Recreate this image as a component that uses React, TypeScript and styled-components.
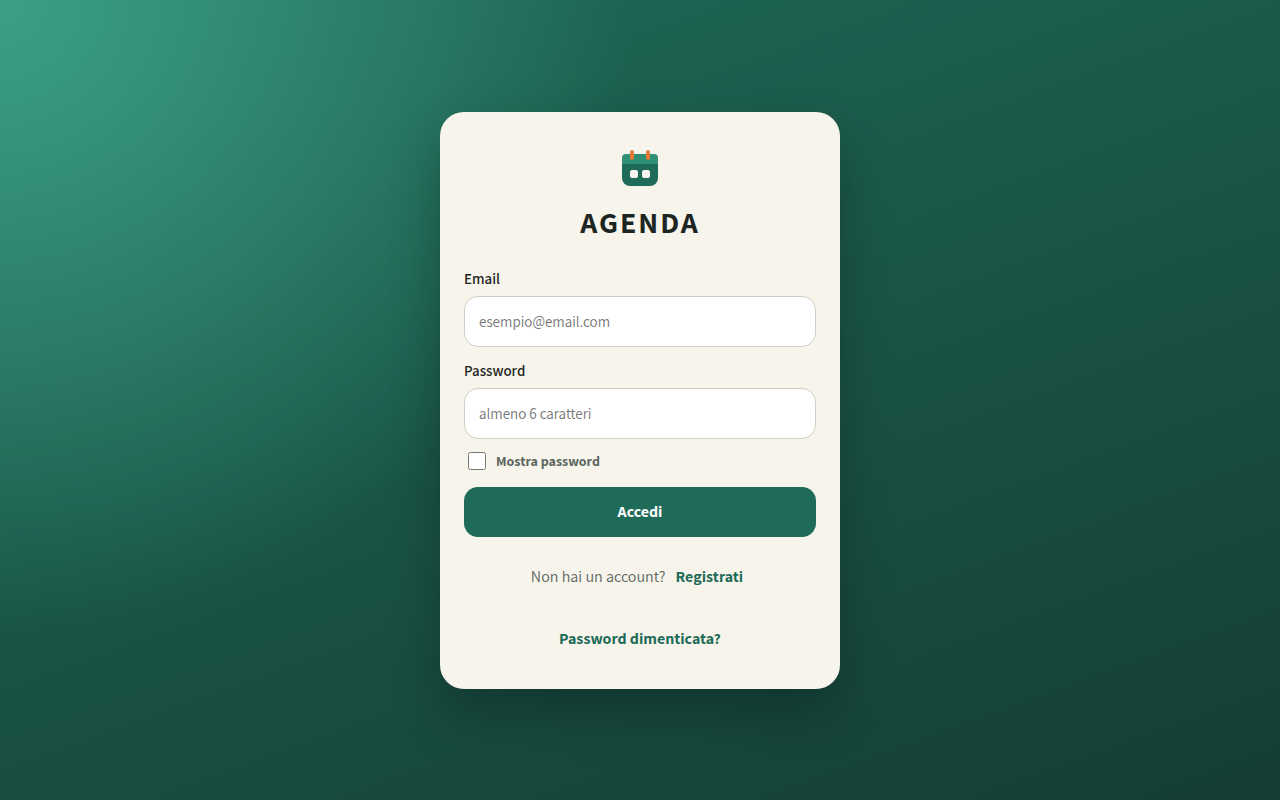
import { useState } from "react";
import styled, { createGlobalStyle } from "styled-components";

const GlobalStyle = createGlobalStyle`
  *, *::before, *::after { box-sizing: border-box; }
  body {
    margin: 0;
    color: #1c2521;
    font-family: "Assistant", "Source Sans Pro", "Source Sans 3", "Noto Sans CJK SC", sans-serif;
    font-size: 16px;
    line-height: 20px;
  }
  button, input { font: inherit; }
`;

const Page = styled.main`
  min-height: 100vh;
  display: grid;
  place-items: center;
  padding: 24px;
  background:
    radial-gradient(circle at top left, #3c9f86 0%, transparent 42%),
    linear-gradient(160deg, #1f6b59 0%, #143d33 100%);
`;

const Card = styled.section`
  width: 100%;
  max-width: 400px;
  padding: 28px 24px;
  border-radius: 24px;
  background: #f7f4ec;
  box-shadow: 0 24px 50px rgba(0, 0, 0, 0.25);
`;

const Brand = styled.header`
  display: flex;
  flex-direction: column;
  align-items: center;
  gap: 8px;
  margin-bottom: 30px;
`;

const Title = styled.h1`
  margin: 0;
  font-size: 30px;
  line-height: 36px;
  font-weight: 700;
  letter-spacing: 2px;
`;

const Form = styled.form`
  display: flex;
  flex-direction: column;
`;

const Field = styled.div`
  display: flex;
  flex-direction: column;
  gap: 8px;

  & + & { margin-top: 15px; }
`;

const Label = styled.label`
  font-size: 15px;
  line-height: 18px;
  font-weight: 600;
`;

const TextInput = styled.input`
  width: 100%;
  height: 51px;
  padding: 0 14px;
  border: 1px solid #cfcfc4;
  border-radius: 14px;
  background: #fff;
  color: inherit;
  font-size: 15px;

  &::placeholder { color: #757575; }
`;

const CheckLabel = styled.label`
  display: flex;
  align-items: center;
  align-self: flex-start;
  gap: 10px;
  min-height: 44px;
  padding: 0 4px;
  margin-bottom: 4px;
  color: #5c665f;
  font-size: 14px;
  font-weight: 700;
`;

const Checkbox = styled.input`
  width: 18px;
  height: 18px;
  margin: 0;
  accent-color: #1f6b59;
`;

const SubmitButton = styled.button`
  height: 50px;
  border: 0;
  border-radius: 14px;
  background: #1f6b59;
  color: #fff;
  font-weight: 700;
  cursor: pointer;
`;

const LinkRow = styled.p`
  display: flex;
  justify-content: center;
  align-items: center;
  gap: 4px;
  min-height: 44px;
  margin: 18px 0 0;
  color: #5c665f;
`;

const TextLink = styled.a`
  padding: 0 6px;
  color: #1f6b59;
  font-weight: 700;
  text-decoration: none;
`;

function CalendarLogo() {
  return (
    <svg width="56" height="56" viewBox="0 0 56 56" aria-hidden="true">
      <rect x="10" y="14" width="36" height="32" rx="8" fill="#1f6b59" />
      <path d="M10 24v-6a4 4 0 0 1 4-4h28a4 4 0 0 1 4 4v6z" fill="#2f8f77" />
      <rect x="18" y="10" width="4" height="10" rx="2" fill="#e07a3f" />
      <rect x="34" y="10" width="4" height="10" rx="2" fill="#e07a3f" />
      <rect x="18" y="30" width="8" height="8" rx="2" fill="#f7f4ec" />
      <rect x="30" y="30" width="8" height="8" rx="2" fill="#f7f4ec" />
    </svg>
  );
}

export default function App() {
  const [visible, setVisible] = useState(false);

  return (
    <>
      <GlobalStyle />
      <Page>
        <Card>
          <Brand>
            <CalendarLogo />
            <Title>AGENDA</Title>
          </Brand>
          <Form onSubmit={(event) => event.preventDefault()}>
            <Field>
              <Label htmlFor="email">Email</Label>
              <TextInput id="email" type="email" placeholder="esempio@email.com" />
            </Field>
            <Field>
              <Label htmlFor="password">Password</Label>
              <TextInput
                id="password"
                type={visible ? "text" : "password"}
                placeholder="almeno 6 caratteri"
              />
            </Field>
            <CheckLabel>
              <Checkbox
                type="checkbox"
                checked={visible}
                onChange={(event) => setVisible(event.target.checked)}
              />
              Mostra password
            </CheckLabel>
            <SubmitButton type="submit">Accedi</SubmitButton>
          </Form>
          <LinkRow>
            Non hai un account?
            <TextLink href="#registrati">Registrati</TextLink>
          </LinkRow>
          <LinkRow>
            <TextLink href="#recupero">Password dimenticata?</TextLink>
          </LinkRow>
        </Card>
      </Page>
    </>
  );
}
